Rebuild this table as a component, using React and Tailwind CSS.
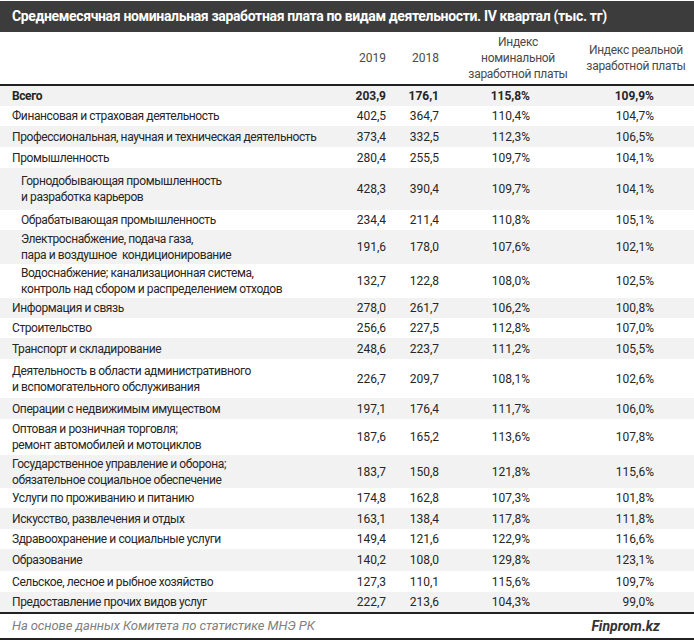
import React from "react";

const rows = [
  { name: ["Всего"], v: ["203,9", "176,1", "115,8%", "109,9%"], bold: true, h: 20 },
  { name: ["Финансовая и страховая деятельность"], v: ["402,5", "364,7", "110,4%", "104,7%"], h: 20 },
  { name: ["Профессиональная, научная и техническая деятельность"], v: ["373,4", "332,5", "112,3%", "106,5%"], h: 21 },
  { name: ["Промышленность"], v: ["280,4", "255,5", "109,7%", "104,1%"], h: 21 },
  { name: ["Горнодобывающая промышленность", "и разработка карьеров"], v: ["428,3", "390,4", "109,7%", "104,1%"], sub: true, h: 42 },
  { name: ["Обрабатывающая промышленность"], v: ["234,4", "211,4", "110,8%", "105,1%"], sub: true, h: 20 },
  { name: ["Электроснабжение, подача газа,", "пара и воздушное  кондиционирование"], v: ["191,6", "178,0", "107,6%", "102,1%"], sub: true, h: 34 },
  { name: ["Водоснабжение; канализационная система,", "контроль над сбором и распределением отходов"], v: ["132,7", "122,8", "108,0%", "102,5%"], sub: true, h: 34 },
  { name: ["Информация и связь"], v: ["278,0", "261,7", "106,2%", "100,8%"], h: 20 },
  { name: ["Строительство"], v: ["256,6", "227,5", "112,8%", "107,0%"], h: 20 },
  { name: ["Транспорт и складирование"], v: ["248,6", "223,7", "111,2%", "105,5%"], h: 21 },
  { name: ["Деятельность в области административного", "и вспомогательного обслуживания"], v: ["226,7", "209,7", "108,1%", "102,6%"], h: 39 },
  { name: ["Операции с недвижимым имуществом"], v: ["197,1", "176,4", "111,7%", "106,0%"], h: 21 },
  { name: ["Оптовая и розничная торговля;", "ремонт автомобилей и мотоциклов"], v: ["187,6", "165,2", "113,6%", "107,8%"], h: 36 },
  { name: ["Государственное управление и оборона;", "обязательное социальное обеспечение"], v: ["183,7", "150,8", "121,8%", "115,6%"], h: 33 },
  { name: ["Услуги по проживанию и питанию"], v: ["174,8", "162,8", "107,3%", "101,8%"], h: 20 },
  { name: ["Искусство, развлечения и отдых"], v: ["163,1", "138,4", "117,8%", "111,8%"], h: 21 },
  { name: ["Здравоохранение и социальные услуги"], v: ["149,4", "121,6", "122,9%", "116,6%"], h: 20 },
  { name: ["Образование"], v: ["140,2", "108,0", "129,8%", "123,1%"], h: 22 },
  { name: ["Сельское, лесное и рыбное хозяйство"], v: ["127,3", "110,1", "115,6%", "109,7%"], h: 21 },
  { name: ["Предоставление прочих видов услуг"], v: ["222,7", "213,6", "104,3%", "99,0%"], h: 20 },
];

const Row = ({ row, i }) => (
  <div
    className={`grid grid-cols-[338px_48px_53px_141px_112px] items-center leading-[16px] text-[12px] ${
      i % 2 === 0 ? "bg-[#f2f2f2]" : "bg-white"
    } ${row.bold ? "font-bold" : ""}`}
    style={{ height: row.h }}
  >
    <div className={`tracking-[-0.4px] ${row.sub ? "pl-[21px]" : "pl-[12px]"}`}>
      {row.name.map((l) => (
        <div key={l} className="whitespace-pre">
          {l}
        </div>
      ))}
    </div>
    <div className="text-right">{row.v[0]}</div>
    <div className="text-right">{row.v[1]}</div>
    <div className="text-right pr-[50px]">{row.v[2]}</div>
    <div className="text-right pr-[38px]">{row.v[3]}</div>
  </div>
);

export default function App() {
  return (
    <div
      className="w-[694px] h-[640px] bg-white text-[#262626] overflow-hidden"
      style={{ fontFamily: "Roboto, 'Open Sans', sans-serif" }}
    >
      <div className="pt-px">
        <div className="h-[31px] bg-[#3c3c3c] flex items-center pl-[12px] text-white font-bold text-[14px] tracking-[-0.35px] whitespace-nowrap">
          Среднемесячная номинальная заработная плата по видам деятельности. IV квартал (тыс. тг)
        </div>
      </div>
      <div className="grid grid-cols-[338px_48px_53px_141px_112px] h-[52px] items-center text-[#4a4a4a] text-[12px] leading-[16px]">
        <div />
        <div className="text-right">2019</div>
        <div className="text-right">2018</div>
        <div className="flex flex-col items-center pl-[17px] tracking-[-0.3px] whitespace-nowrap">
          <span>Индекс</span>
          <span>номинальной</span>
          <span>заработной платы</span>
        </div>
        <div className="flex flex-col items-center tracking-[-0.3px] whitespace-nowrap">
          <span>Индекс реальной</span>
          <span>заработной платы</span>
        </div>
      </div>
      <div className="h-[2px] bg-[#222]" />
      {rows.map((r, i) => (
        <Row key={i} row={r} i={i} />
      ))}
      <div className="h-[2px] bg-[#222]" />
      <div className="h-[24px] flex items-center justify-between pl-[12px] pr-[34px]">
        <span className="italic text-[#808080] text-[13px] tracking-[-0.1px]">
          На основе данных Комитета по статистике МНЭ РК
        </span>
        <span className="italic font-bold text-[#333] text-[14px]">Finprom.kz</span>
      </div>
      <div className="h-[2px] bg-[#222]" />
    </div>
  );
}
